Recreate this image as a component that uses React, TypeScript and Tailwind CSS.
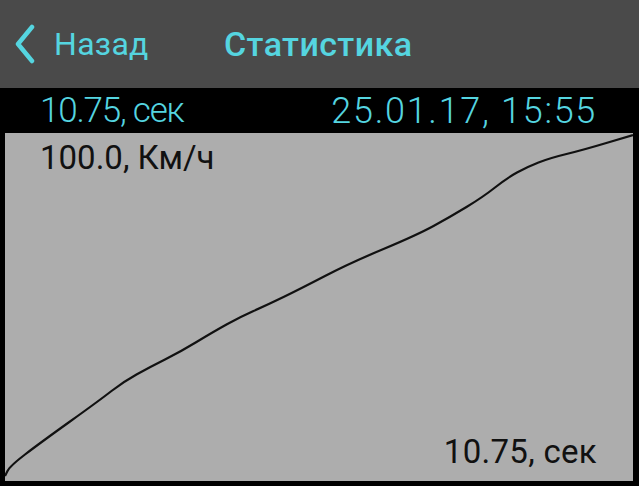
import React from 'react';

// speed curve, in the plot's own coordinates (628 x 348)
const curve: [number, number][] = [
  [0, 343], [5, 333], [35, 310], [95, 267], [118, 249], [145, 234], [175, 219],
  [208, 199], [235, 184], [262, 172], [295, 156], [345, 130], [412, 102],
  [445, 84], [478, 64], [502, 45], [522, 34], [545, 25], [578, 17], [628, 2],
];

const toPath = (pts: [number, number][]) => {
  let d = `M${pts[0][0]},${pts[0][1]}`;
  for (let i = 1; i < pts.length; i++) {
    const [x0, y0] = pts[i - 1];
    const [x1, y1] = pts[i];
    const mx = (x0 + x1) / 2;
    const my = (y0 + y1) / 2;
    d += ` Q${x0},${y0} ${mx},${my}`;
  }
  const last = pts[pts.length - 1];
  d += ` L${last[0]},${last[1]}`;
  return d;
};

const App = () => {
  return (
    <div className="w-[639px] h-[486px] bg-black flex flex-col overflow-hidden" style={{ fontFamily: 'Roboto, "Liberation Sans", sans-serif' }}>
      <header className="h-[88px] bg-[#4a4a4a] flex items-center text-[#55d5e0] shrink-0">
        <div className="flex items-center pl-[14px] w-[224px]">
          <svg width="22" height="40" viewBox="0 0 22 40" className="mr-[18px]">
            <path d="M18 3 L4 20 L18 37" fill="none" stroke="currentColor" strokeWidth="4.5" strokeLinecap="round" strokeLinejoin="round" />
          </svg>
          <span className="text-[32px] leading-none tracking-[0.3px]">Назад</span>
        </div>
        <span className="text-[34px] font-medium leading-none tracking-[0.4px]">Статистика</span>
      </header>

      <div className="h-[45px] flex items-center justify-between pl-[40px] pr-[42px] text-[#55d5e0] text-[36px] font-light leading-none shrink-0">
        <span className="tracking-[-1.2px] text-[35px]">10.75, сек</span>
        <span className="tracking-[1.7px]">25.01.17, 15:55</span>
      </div>

      <div className="flex-1 pl-[5px] pr-[6px] pb-[5px] flex">
        <div className="relative flex-1 bg-[#adadad]">
          <svg className="absolute inset-0" width="628" height="348" viewBox="0 0 628 348">
            <path d={toPath(curve)} fill="none" stroke="#111" strokeWidth="2.2" strokeLinejoin="round" />
          </svg>
          <div className="relative flex flex-col h-full justify-between pl-[35px] pr-[36px] pt-[8px] pb-[13px] text-[#111] text-[33px] leading-none">
            <span>100.0, Км/ч</span>
            <span className="self-end tracking-[0.3px]">10.75, сек</span>
          </div>
        </div>
      </div>
    </div>
  );
};

export default App;
